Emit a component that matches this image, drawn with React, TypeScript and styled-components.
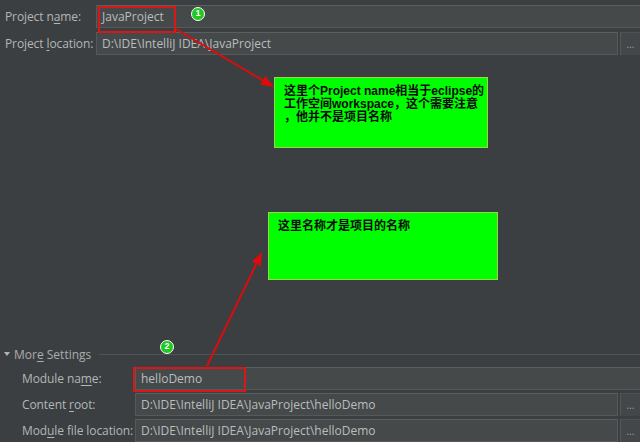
import React from "react";
import styled, { createGlobalStyle } from "styled-components";

const Global = createGlobalStyle`
  html, body { margin: 0; padding: 0; background: #3c3f41; }
  #root { width: 640px; height: 442px; }
`;

const Frame = styled.div`
  position: relative;
  width: 640px;
  height: 442px;
  overflow: hidden;
  background: #3c3f41;
  display: flex;
  flex-direction: column;
  font-family: "Open Sans", "Noto Sans", sans-serif;
  font-size: 12px;
  color: #b4b8ba;
`;

const Form = styled.div<{ $labelW: number; $pad: number; $gap: number }>`
  display: grid;
  grid-template-columns: ${(p) => p.$labelW}px 1fr 20px;
  grid-auto-rows: 23px;
  row-gap: ${(p) => p.$gap}px;
  padding-left: ${(p) => p.$pad}px;
  align-items: center;
`;

const Label = styled.label`
  white-space: nowrap;
  color: #b2b6b8;
  letter-spacing: -0.1px;
`;

const U = styled.span`
  text-decoration: underline;
  text-underline-offset: 2px;
`;

const Field = styled.div<{ $wide?: boolean }>`
  grid-column: ${(p) => (p.$wide ? "2 / 4" : "2 / 3")};
  height: 23px;
  box-sizing: border-box;
  background: #45494a;
  border: 1px solid #55595b;
  border-top-color: #5b5f61;
  ${(p) => (p.$wide ? "border-right: none;" : "margin-right: 2px;")}
  padding-left: 5px;
  display: flex;
  align-items: center;
  color: #babdbf;
  white-space: nowrap;
  overflow: hidden;
`;

const DotsButton = styled.div`
  height: 23px;
  box-sizing: border-box;
  background: #43474a;
  border-left: 1px solid #56595b;
  border-top: 1px solid #4e5254;
  display: flex;
  align-items: center;
  justify-content: center;
  color: #9a9ea0;
  font-size: 10px;
`;

const Top = styled.div`
  padding-top: 5px;
`;

const Spacer = styled.div`
  flex: 1;
`;

const SectionHeader = styled.div`
  height: 14px;
  margin-bottom: 6px;
  display: flex;
  align-items: center;
  padding-left: 4px;
  gap: 4px;
  color: #a9adaf;
`;

const Triangle = styled.span`
  width: 0;
  height: 0;
  border-left: 3px solid transparent;
  border-right: 3px solid transparent;
  border-top: 4px solid #b0b3b5;
`;

const Rule = styled.div`
  flex: 1;
  height: 1px;
  background: #4f5355;
  margin-left: 4px;
`;

const Overlay = styled.svg`
  position: absolute;
  left: 0;
  top: 0;
  pointer-events: none;
`;

const Note = styled.div<{ $x: number; $y: number; $w: number; $h: number }>`
  position: absolute;
  left: ${(p) => p.$x}px;
  top: ${(p) => p.$y}px;
  width: ${(p) => p.$w}px;
  height: ${(p) => p.$h}px;
  box-sizing: border-box;
  background: #00ff00;
  border: 1px solid #9ad84a;
  padding: 7px 0 0 9px;
  font-family: "Liberation Sans", "Noto Sans CJK SC", sans-serif;
  font-weight: bold;
  font-size: 12px;
  line-height: 13px;
  color: #0a0a0a;
  white-space: nowrap;
`;

const RedBox = styled.div<{ $x: number; $y: number; $w: number; $h: number }>`
  position: absolute;
  left: ${(p) => p.$x}px;
  top: ${(p) => p.$y}px;
  width: ${(p) => p.$w}px;
  height: ${(p) => p.$h}px;
  box-sizing: border-box;
  border: 2px solid #d81818;
`;

const Badge = styled.div<{ $x: number; $y: number }>`
  position: absolute;
  left: ${(p) => p.$x - 7}px;
  top: ${(p) => p.$y - 7}px;
  width: 14px;
  height: 14px;
  box-sizing: border-box;
  border-radius: 50%;
  background: #22c822;
  border: 1.5px solid #ffffff;
  color: #ffffff;
  font-family: "Liberation Sans", sans-serif;
  font-weight: bold;
  font-size: 9px;
  line-height: 11px;
  text-align: center;
`;

function Arrow({ x1, y1, x2, y2 }: { x1: number; y1: number; x2: number; y2: number }) {
  const dx = x2 - x1;
  const dy = y2 - y1;
  const len = Math.hypot(dx, dy);
  const ux = dx / len;
  const uy = dy / len;
  const hl = 13;
  const hw = 5;
  const bx = x2 - ux * hl;
  const by = y2 - uy * hl;
  const p1 = `${bx - uy * hw},${by + ux * hw}`;
  const p2 = `${bx + uy * hw},${by - ux * hw}`;
  return (
    <g>
      <line x1={x1} y1={y1} x2={bx + ux * 2} y2={by + uy * 2} stroke="#dc0c0c" strokeWidth={2} />
      <polygon points={`${x2},${y2} ${p1} ${p2}`} fill="#dc0c0c" />
    </g>
  );
}

export default function App() {
  return (
    <Frame>
      <Global />
      <Top>
        <Form $labelW={91} $pad={5} $gap={4}>
          <Label>
            Project n<U>a</U>me:
          </Label>
          <Field $wide>JavaProject</Field>
          <Label>
            Project <U>l</U>ocation:
          </Label>
          <Field>D:\IDE\IntelliJ IDEA\JavaProject</Field>
          <DotsButton>...</DotsButton>
        </Form>
      </Top>
      <Spacer />
      <SectionHeader>
        <Triangle />
        <span>
          Mor<U>e</U> Settings
        </span>
        <Rule />
      </SectionHeader>
      <Form $labelW={113} $pad={22} $gap={3}>
        <Label>
          Module na<U>m</U>e:
        </Label>
        <Field $wide>helloDemo</Field>
        <Label>
          Content <U>r</U>oot:
        </Label>
        <Field>D:\IDE\IntelliJ IDEA\JavaProject\helloDemo</Field>
        <DotsButton>...</DotsButton>
        <Label>
          Mod<U>u</U>le file location:
        </Label>
        <Field>D:\IDE\IntelliJ IDEA\JavaProject\helloDemo</Field>
        <DotsButton>...</DotsButton>
      </Form>

      <RedBox $x={98} $y={6} $w={78} $h={27} />
      <RedBox $x={133} $y={367} $w={113} $h={25} />
      <Overlay width={640} height={442}>
        <Arrow x1={176} y1={29} x2={274} y2={87} />
        <Arrow x1={207} y1={366} x2={262} y2={252} />
      </Overlay>
      <Badge $x={198} $y={14}>1</Badge>
      <Badge $x={167} $y={347}>2</Badge>
      <Note $x={274} $y={77} $w={214} $h={71}>
        这里个Project name相当于eclipse的
        <br />
        工作空间workspace，这个需要注意
        <br />
        ，他并不是项目名称
      </Note>
      <Note $x={268} $y={212} $w={230} $h={68}>
        这里名称才是项目的名称
      </Note>
    </Frame>
  );
}
